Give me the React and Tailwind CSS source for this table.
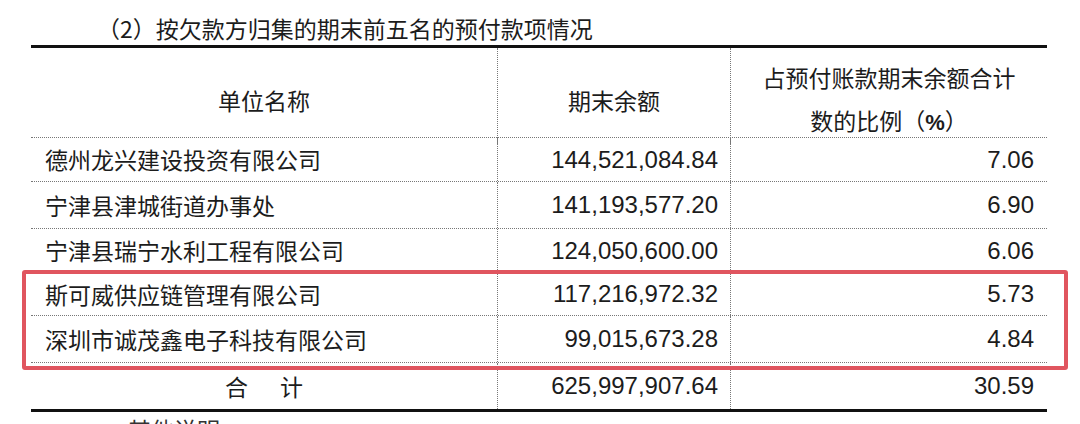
import React from "react";

const cjk = "font-['Noto_Sans_CJK_SC',sans-serif]";
const num = "font-['Liberation_Sans',Arial,sans-serif]";

const rows = [
  { name: "德州龙兴建设投资有限公司", amount: "144,521,084.84", ratio: "7.06", h: "h-[44px]" },
  { name: "宁津县津城街道办事处", amount: "141,193,577.20", ratio: "6.90", h: "h-[47px]" },
  { name: "宁津县瑞宁水利工程有限公司", amount: "124,050,600.00", ratio: "6.06", h: "h-[44px]" },
  { name: "斯可威供应链管理有限公司", amount: "117,216,972.32", ratio: "5.73", h: "h-[43px]" },
  { name: "深圳市诚茂鑫电子科技有限公司", amount: "99,015,673.28", ratio: "4.84", h: "h-[47px]" },
];

const App = () => {
  return (
    <div className="relative w-[1080px] h-[424px] overflow-hidden bg-white text-[#1c1c1c]">
      {/* 标题 */}
      <div className={`${cjk} text-[23px] leading-none pl-[97px] pt-[17px] h-[45px]`}>
        （2）按欠款方归集的期末前五名的预付款项情况
      </div>

      {/* 表格 */}
      <div className="ml-[31px] w-[1016px] border-t-[3px] border-b-[3px] border-[#111]">
        {/* 表头 */}
        <div className={`grid grid-cols-[466px_233px_317px] h-[90px] border-b border-dotted border-[#777] ${cjk} text-[23px]`}>
          <div className="flex items-center justify-center pt-[8px]">单位名称</div>
          <div className="flex items-center justify-center pt-[8px] border-l border-dotted border-[#777]">期末余额</div>
          <div className="flex flex-col items-center justify-center pt-[8px] leading-[43px] border-l border-dotted border-[#777]">
            <span>占预付账款期末余额合计</span>
            <span>
              数的比例（<span className={`${num} font-bold text-[22px]`}>%</span>）
            </span>
          </div>
        </div>

        {rows.map((r) => (
          <div
            key={r.name}
            className={`grid grid-cols-[466px_233px_317px] ${r.h} border-b border-dotted border-[#777]`}
          >
            <div className={`flex items-center pl-[14px] ${cjk} text-[23px]`}>{r.name}</div>
            <div className={`flex items-center justify-end pr-[12px] border-l border-dotted border-[#777] ${num} text-[24px]`}>
              {r.amount}
            </div>
            <div className={`flex items-center justify-end pr-[13px] border-l border-dotted border-[#777] ${num} text-[24px]`}>
              {r.ratio}
            </div>
          </div>
        ))}

        {/* 合计 */}
        <div className="grid grid-cols-[466px_233px_317px] h-[46px]">
          <div className={`flex items-center justify-center ${cjk} text-[23px]`}>
            <span>合</span>
            <span className="ml-[32px]">计</span>
          </div>
          <div className={`flex items-center justify-end pr-[12px] border-l border-dotted border-[#777] ${num} text-[24px]`}>
            625,997,907.64
          </div>
          <div className={`flex items-center justify-end pr-[13px] border-l border-dotted border-[#777] ${num} text-[24px]`}>
            30.59
          </div>
        </div>
      </div>

      {/* 下一段（被裁切） */}
      <div className={`${cjk} text-[23px] leading-none pl-[128px] pt-[6px] text-[#333]`}>其他说明：</div>

      {/* 红色标注框 */}
      <div className="absolute left-[22px] top-[270px] w-[1046px] h-[100px] border-4 border-[#e0555f] rounded-[3px]" />
    </div>
  );
};

export default App;
